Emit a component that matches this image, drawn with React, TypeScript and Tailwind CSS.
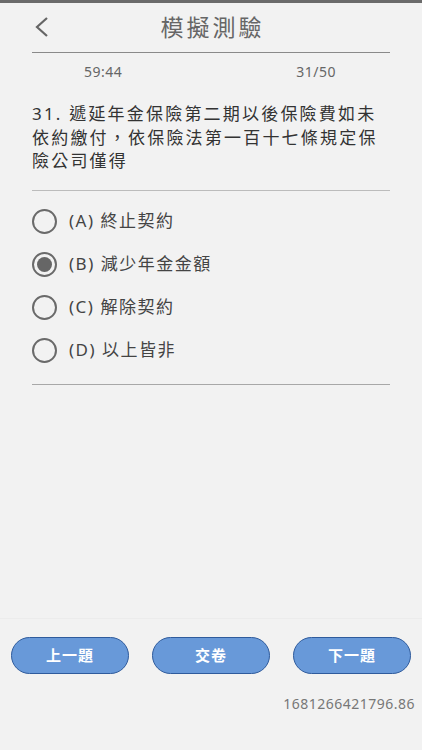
import React, { useState } from 'react';

const options = [
  { key: 'A', text: '終止契約' },
  { key: 'B', text: '減少年金金額' },
  { key: 'C', text: '解除契約' },
  { key: 'D', text: '以上皆非' },
];

const font = { fontFamily: '"Noto Sans", "Noto Sans CJK TC", sans-serif' };

const App: React.FC = () => {
  const [picked, setPicked] = useState('B');

  return (
    <div className="w-[422px] h-[750px] bg-[#f2f2f2] flex flex-col overflow-hidden" style={font}>
      <div className="h-[3px] bg-[#6b6b6b]" />

      <div className="px-8 flex-1 flex flex-col">
        {/* header */}
        <div className="relative h-[50px] flex items-center justify-center border-b border-[#8a8a8a]">
          <button className="absolute left-0 top-[12px] text-[#666]" aria-label="back">
            <svg width="22" height="24" viewBox="0 0 22 24" fill="none" stroke="currentColor" strokeWidth="2.2">
              <path d="M15 3 L5 12 L15 21" />
            </svg>
          </button>
          <h1 className="text-[23px] text-[#666] tracking-[3px] pl-[3px] leading-none">模擬測驗</h1>
        </div>

        <div className="flex justify-between text-[14px] text-[#666] pt-[8px] pl-[52px] pr-[54px] tracking-[0.5px]">
          <span>59:44</span>
          <span>31/50</span>
        </div>

        {/* question */}
        <p className="mt-[20px] text-[17px] leading-[23.5px] text-[#333] tracking-[2.2px] pb-[17px] border-b border-[#bcbcbc]">
          31. 遞延年金保險第二期以後保險費如未依約繳付，依保險法第一百十七條規定保險公司僅得
        </p>

        <div className="flex flex-col pt-[9px] pb-[12px] border-b border-[#a8a8a8]">
          {options.map((o) => (
            <button
              key={o.key}
              onClick={() => setPicked(o.key)}
              className="flex items-center h-[43px] text-left"
            >
              <span className="w-[25px] h-[25px] rounded-full border-2 border-[#6a6a6a] flex items-center justify-center">
                {picked === o.key && <span className="w-[15px] h-[15px] rounded-full bg-[#666]" />}
              </span>
              <span className="ml-[12px] text-[17px] text-[#444] tracking-[1.5px]">
                ({o.key}) {o.text}
              </span>
            </button>
          ))}
        </div>
      </div>

      {/* footer */}
      <div className="h-[132px] border-t border-[#ececec] flex flex-col">
        <div className="flex justify-between px-[11px] pt-[18px]">
          {['上一題', '交卷', '下一題'].map((t) => (
            <button
              key={t}
              className="w-[118px] h-[37px] rounded-full bg-[#6899d9] border border-[#2f5b9c] text-white text-[15px] font-bold tracking-[1px]"
            >
              {t}
            </button>
          ))}
        </div>
        <div className="text-right pr-[7px] mt-[19px] text-[14px] text-[#777] tracking-[0.5px]">1681266421796.86</div>
      </div>
    </div>
  );
};

export default App;
